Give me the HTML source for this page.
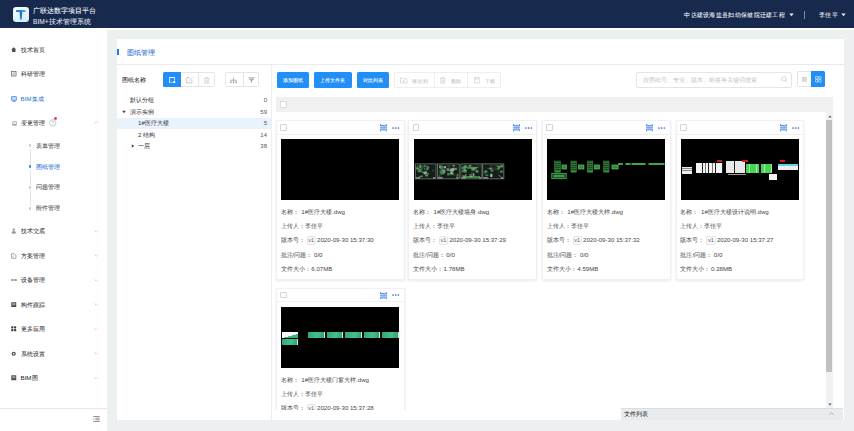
<!DOCTYPE html>
<html><head><meta charset="utf-8">
<style>
*{box-sizing:border-box;margin:0;padding:0}
html,body{width:854px;height:431px;overflow:hidden;background:#edf0f1;font-family:"Liberation Sans",sans-serif;color:#333}
.a{position:absolute;white-space:nowrap}
.t{position:absolute;white-space:nowrap;height:10px;line-height:10px;text-shadow:0 0 0.4px rgba(0,0,0,.3)}
#hdr .t{text-shadow:0 0 0.4px rgba(255,255,255,.5)}
#hdr{position:absolute;left:0;top:0;width:854px;height:28.4px;background:#172a4e}
#side{position:absolute;left:0;top:28px;width:107px;height:403px;background:#fff}
#panel{position:absolute;left:117px;top:38.5px;width:727px;height:381.5px;background:#fff}
.nav{font-size:6.2px;color:#444;left:20.5px}
.chev{position:absolute;left:94px;width:3.2px;height:3.2px;border-right:0.6px solid #b4b4b4;border-bottom:0.6px solid #b4b4b4;transform:rotate(45deg)}
.sub{font-size:6.2px;color:#555;left:35.5px}
.dot{position:absolute;left:28.6px;width:2.6px;height:2.6px;border-radius:50%;background:#ccc}
.btn{position:absolute;background:#228ff6;text-shadow:0 0 0.4px rgba(255,255,255,.6);border-radius:1.5px;color:#fff;font-size:5.3px;text-align:center;line-height:16px;height:16px;top:71.5px}
.card{position:absolute;width:128.5px;background:#fff;border:0.6px solid #eef0f2;box-shadow:0 1px 2.5px rgba(0,0,0,0.09);overflow:hidden}
.card .hd{position:absolute;left:0;top:0;right:0;height:13.5px;border-bottom:0.6px solid #eef0f2}
.card .cb{position:absolute;left:3.4px;top:3px;width:6.6px;height:6.6px;border:0.6px solid #d0d3d8;border-radius:1px;background:#fff}
.card .img{position:absolute;left:4.4px;top:18.3px;width:118px;height:61px;background:#000;overflow:hidden}
.card .ln{text-shadow:0 0 0.4px rgba(0,0,0,.2);position:absolute;left:3.6px;font-size:6.1px;color:#5a5a5a;height:10px;line-height:10px}
.card .ln.tag{border:0.6px solid #e6e6e6;border-radius:2px;padding:0 0.6px;height:8.6px;line-height:7.6px;font-size:5.6px;background:#f9f9f9;color:#666;text-shadow:none}
.ic{position:absolute}
</style></head><body>
<div id="hdr">
  <div class="a" style="left:13.2px;top:7px;width:15.4px;height:15px;border-radius:3.2px;background:linear-gradient(160deg,#f6fcff,#cfeafc)">
    <svg width="15" height="15" viewBox="0 0 15 15" style="position:absolute;left:0;top:0"><defs><linearGradient id="tg" x1="0" y1="0" x2="0" y2="1"><stop offset="0" stop-color="#1e6cc0"></stop><stop offset="1" stop-color="#2b8fd8"></stop></linearGradient><linearGradient id="tb" x1="0" y1="0" x2="1" y2="0"><stop offset="0" stop-color="#1b5fb2"></stop><stop offset="1" stop-color="#3aa2e4"></stop></linearGradient></defs><path d="M3 3.3Q7.5 2.6 12.6 3.2L12.4 5Q7.6 4.6 3.2 5z" fill="url(#tb)"></path><path d="M6.5 4.6h2.7v2.3L8.7 12.6H7z" fill="url(#tg)"></path></svg>
  </div>
  <div class="t" style="left: 33px; top: 6px; font-size: 7.1px; color: rgb(232, 237, 245); width: 63px; text-align: justify; text-align-last: justify;">广联达数字项目平台</div>
  <div class="t" style="left: 33px; top: 17px; font-size: 6.6px; color: rgb(201, 210, 224); width: 57.58px; text-align: justify; text-align-last: justify;">BIM+技术管理系统</div>
  <div class="t" style="left: 684.3px; top: 9.5px; font-size: 6.4px; letter-spacing: 0.3px; color: rgb(232, 237, 245); width: 100.51px; text-align: justify; text-align-last: justify;">中达建设海盐县妇幼保健院迁建工程</div>
  <svg class="ic" style="left:788.5px;top:13px" width="5" height="4" viewBox="0 0 5 4"><path d="M0.3 0.6h4.4L2.5 3.2z" fill="#e8edf5"></path></svg>
  <div class="a" style="left:803.5px;top:10.5px;width:1px;height:8px;background:#7d8aa2"></div>
  <div class="t" style="left: 818.8px; top: 9.5px; font-size: 6.4px; letter-spacing: 0.7px; color: rgb(232, 237, 245); width: 19.41px; text-align: justify; text-align-last: justify;">李佳平</div>
  <svg class="ic" style="left:841px;top:13px" width="5" height="4" viewBox="0 0 5 4"><path d="M0.3 0.6h4.4L2.5 3.2z" fill="#e8edf5"></path></svg>
</div>
<div id="side"></div>
<div class="a" style="left:107px;top:28.4px;width:747px;height:1.9px;background:#fff"></div>
<div class="t nav" style="top: 44.5px; color: rgb(68, 68, 68); width: 24px; text-align: justify; text-align-last: justify;">技术首页</div>
<svg class="ic" style="left:11.3px;top:46.7px" width="5.5" height="5.5" viewBox="0 0 6 6"><path d="M3 0.4L0.3 2.8h0.8v2.8h3.8V2.8h0.8z" fill="#505050"></path></svg>

<div class="t nav" style="top: 69px; color: rgb(68, 68, 68); width: 24px; text-align: justify; text-align-last: justify;">科研管理</div>
<svg class="ic" style="left:11.3px;top:71.2px" width="5.5" height="5.5" viewBox="0 0 6 6"><rect x="0.5" y="0.5" width="5" height="5" fill="none" stroke="#6a6a6a" stroke-width="0.8"></rect><path d="M1.5 2h3M1.5 3.2h3M1.5 4.4h3" stroke="#777" stroke-width="0.5"></path></svg>

<div class="t nav" style="top: 93.5px; color: rgb(75, 141, 240); width: 23.02px; text-align: justify; text-align-last: justify;">BIM集成</div>
<svg class="ic" style="left:11px;top:95.5px" width="6" height="6" viewBox="0 0 6 6"><rect x="0.5" y="0.5" width="5" height="4" rx="0.6" fill="#b9d3fa" stroke="#4b8df0" stroke-width="0.8"></rect><path d="M1.5 5.6h3" stroke="#4b8df0" stroke-width="0.8"></path></svg>

<div class="t nav" style="top: 118px; color: rgb(68, 68, 68); width: 24px; text-align: justify; text-align-last: justify;">变更管理</div>
<svg class="ic" style="left:11.5px;top:120.5px" width="5" height="5" viewBox="0 0 5 5"><rect x="0.3" y="0.3" width="4.4" height="4.4" fill="#a8a8a8"></rect><rect x="1" y="1" width="3" height="2" fill="#e6e6e6"></rect></svg>
<svg class="ic" style="left:11.5px;top:120.5px" width="0" height="0"></svg>
<svg class="ic" style="left:48.6px;top:119.2px" width="8" height="8" viewBox="0 0 8 8"><circle cx="3.8" cy="3.8" r="3.2" fill="none" stroke="#aaa" stroke-width="0.6"></circle><path d="M2.8 3c0-0.6 0.4-1 1-1s1 0.4 1 0.9c0 0.6-0.9 0.7-0.9 1.4" fill="none" stroke="#aaa" stroke-width="0.6"></path><circle cx="3.9" cy="5.6" r="0.35" fill="#aaa"></circle></svg>
<div class="a" style="left:54px;top:117px;width:2.8px;height:2.8px;border-radius:50%;background:#e24a68"></div>
<svg class="ic" style="left:93.8px;top:121.4px" width="4.6" height="2.8" viewBox="0 0 4.6 2.8"><path d="M0.3 2.5L2.3 0.5L4.3 2.5" fill="none" stroke="#b8b8b8" stroke-width="0.6"></path></svg>
<div class="t nav" style="top: 226px; color: rgb(68, 68, 68); width: 24px; text-align: justify; text-align-last: justify;">技术交底</div>
<svg class="ic" style="left:11.3px;top:228.0px" width="5.5" height="6" viewBox="0 0 6 6"><circle cx="3" cy="1.6" r="1.2" fill="#8c8c8c"></circle><path d="M0.6 5.8L1.5 3.2h3l0.9 2.6z" fill="#8c8c8c"></path></svg>
<svg class="ic" style="left:93.8px;top:229.6px" width="4.6" height="2.8" viewBox="0 0 4.6 2.8"><path d="M0.3 0.3L2.3 2.3L4.3 0.3" fill="none" stroke="#b8b8b8" stroke-width="0.6"></path></svg>
<div class="t nav" style="top: 250.5px; color: rgb(68, 68, 68); width: 24px; text-align: justify; text-align-last: justify;">方案管理</div>
<svg class="ic" style="left:11.3px;top:252.5px" width="5.5" height="6" viewBox="0 0 6 6"><path d="M0.6 0.5h3.2l1.6 1.6v3.4H0.6z" fill="none" stroke="#8c8c8c" stroke-width="0.8"></path><path d="M1.8 3.8l1.6-1.2" stroke="#8c8c8c" stroke-width="0.8"></path></svg>
<svg class="ic" style="left:93.8px;top:254.1px" width="4.6" height="2.8" viewBox="0 0 4.6 2.8"><path d="M0.3 0.3L2.3 2.3L4.3 0.3" fill="none" stroke="#b8b8b8" stroke-width="0.6"></path></svg>
<div class="t nav" style="top: 275px; color: rgb(68, 68, 68); width: 24px; text-align: justify; text-align-last: justify;">设备管理</div>
<svg class="ic" style="left:11px;top:278.0px" width="6" height="4" viewBox="0 0 6 4"><rect x="0.2" y="1" width="2.2" height="2" fill="#999"></rect><rect x="3.2" y="1" width="2.6" height="2" fill="#999"></rect></svg>
<svg class="ic" style="left:93.8px;top:278.6px" width="4.6" height="2.8" viewBox="0 0 4.6 2.8"><path d="M0.3 0.3L2.3 2.3L4.3 0.3" fill="none" stroke="#b8b8b8" stroke-width="0.6"></path></svg>
<div class="t nav" style="top: 299.5px; color: rgb(68, 68, 68); width: 24px; text-align: justify; text-align-last: justify;">构件跟踪</div>
<svg class="ic" style="left:11.3px;top:301.7px" width="5.5" height="5.5" viewBox="0 0 6 6"><rect x="0.3" y="0.3" width="5.4" height="5.4" fill="#4a4a4a"></rect><rect x="1.2" y="1.2" width="3.6" height="2.4" fill="#9a9a9a"></rect></svg>
<svg class="ic" style="left:93.8px;top:303.1px" width="4.6" height="2.8" viewBox="0 0 4.6 2.8"><path d="M0.3 0.3L2.3 2.3L4.3 0.3" fill="none" stroke="#b8b8b8" stroke-width="0.6"></path></svg>
<div class="t nav" style="top: 324px; color: rgb(68, 68, 68); width: 24px; text-align: justify; text-align-last: justify;">更多应用</div>
<svg class="ic" style="left:11.3px;top:326.2px" width="5.5" height="5.5" viewBox="0 0 6 6"><rect x="0.3" y="0.3" width="2.3" height="2.3" rx="0.6" fill="#3a3a3a"></rect><rect x="3.4" y="0.3" width="2.3" height="2.3" rx="0.6" fill="#3a3a3a"></rect><rect x="0.3" y="3.4" width="2.3" height="2.3" rx="0.6" fill="#3a3a3a"></rect><rect x="3.4" y="3.4" width="2.3" height="2.3" rx="0.6" fill="#3a3a3a"></rect></svg>
<svg class="ic" style="left:93.8px;top:327.6px" width="4.6" height="2.8" viewBox="0 0 4.6 2.8"><path d="M0.3 0.3L2.3 2.3L4.3 0.3" fill="none" stroke="#b8b8b8" stroke-width="0.6"></path></svg>
<div class="t nav" style="top: 348.5px; color: rgb(68, 68, 68); width: 24px; text-align: justify; text-align-last: justify;">系统设置</div>
<svg class="ic" style="left:11.3px;top:350.7px" width="5.5" height="5.5" viewBox="0 0 6 6"><circle cx="3" cy="3" r="2.3" fill="#555"></circle><circle cx="3" cy="3" r="0.9" fill="#fff"></circle></svg>
<svg class="ic" style="left:93.8px;top:352.1px" width="4.6" height="2.8" viewBox="0 0 4.6 2.8"><path d="M0.3 0.3L2.3 2.3L4.3 0.3" fill="none" stroke="#b8b8b8" stroke-width="0.6"></path></svg>
<div class="t nav" style="top: 373px; color: rgb(68, 68, 68); width: 17.02px; text-align: justify; text-align-last: justify;">BIM图</div>
<svg class="ic" style="left:11.3px;top:375.2px" width="5.5" height="5.5" viewBox="0 0 6 6"><rect x="0.3" y="0.3" width="5.4" height="5.4" fill="#4a4a4a"></rect><rect x="1.2" y="1.2" width="3.6" height="2.4" fill="#9a9a9a"></rect></svg>
<svg class="ic" style="left:93.8px;top:376.6px" width="4.6" height="2.8" viewBox="0 0 4.6 2.8"><path d="M0.3 0.3L2.3 2.3L4.3 0.3" fill="none" stroke="#b8b8b8" stroke-width="0.6"></path></svg>
<div class="a" style="left:29.6px;top:149px;width:0.7px;height:15.5px;background:#e4e4e4"></div><div class="a" style="left:29.6px;top:169.5px;width:0.7px;height:15.5px;background:#e4e4e4"></div><div class="a" style="left:29.6px;top:190px;width:0.7px;height:15.5px;background:#e4e4e4"></div>
<div class="dot" style="top:144.4px;background:#c9c9c9"></div>
<div class="t sub" style="top: 140.7px; color: rgb(85, 85, 85); width: 24px; text-align: justify; text-align-last: justify;">表单管理</div>
<div class="dot" style="top:165.4px;background:#2f7ff0"></div>
<div class="t sub" style="top: 161.7px; color: rgb(47, 127, 240); width: 24px; text-align: justify; text-align-last: justify;">图纸管理</div>
<div class="dot" style="top:186.1px;background:#c9c9c9"></div>
<div class="t sub" style="top: 182.4px; color: rgb(85, 85, 85); width: 24px; text-align: justify; text-align-last: justify;">问题管理</div>
<div class="dot" style="top:207.0px;background:#c9c9c9"></div>
<div class="t sub" style="top: 203.3px; color: rgb(85, 85, 85); width: 24px; text-align: justify; text-align-last: justify;">附件管理</div>
<div class="a" style="left:0;top:408px;width:107px;height:0.7px;background:#e8e8e8"></div>
<svg class="ic" style="left:92.5px;top:416px" width="7" height="6" viewBox="0 0 7 6"><path d="M0.3 0.5h6.4M2.3 2.2h4.4M2.3 3.8h4.4M0.3 5.5h6.4" stroke="#666" stroke-width="0.7"></path><path d="M0.3 2.2v1.6l1.2-0.8z" fill="#666"></path></svg>
<div id="panel"></div>
<div class="a" style="left:117px;top:49px;width:2px;height:6.2px;background:#1f7fe8"></div>
<div class="t" style="left: 126.5px; top: 47.6px; font-size: 7.1px; color: rgb(58, 130, 234); width: 28px; text-align: justify; text-align-last: justify;">图纸管理</div>
<div class="a" style="left:117px;top:64px;width:727px;height:0.7px;background:#e8eaee"></div>
<div class="t" style="left: 122px; top: 74.5px; font-size: 6.2px; color: rgb(51, 51, 51); width: 24px; text-align: justify; text-align-last: justify;">图纸名称</div>
<div class="a" style="left:163.4px;top:71.7px;width:51.7px;height:15.7px;border:0.6px solid #e3e5e8;border-radius:1.5px;background:#fff"></div>
<div class="a" style="left:163.4px;top:71.7px;width:17.3px;height:15.7px;border-radius:1.5px 0 0 1.5px;background:#228ff6"></div>
<div class="a" style="left:197.5px;top:71.7px;width:0.6px;height:15.7px;background:#e3e5e8"></div>
<svg class="ic" style="left:169px;top:76.8px" width="7" height="6.5" viewBox="0 0 7 6.5"><path d="M4.5 0.5H0.6v5.4h3.6" fill="none" stroke="#fff" stroke-width="0.8"></path><path d="M0.6 0.5h5v2.8" fill="none" stroke="#fff" stroke-width="0.8"></path><circle cx="5.2" cy="5" r="1.2" fill="#fff"></circle></svg>
<svg class="ic" style="left:185.8px;top:77px" width="7.5" height="6.5" viewBox="0 0 7.5 6.5"><path d="M3.5 0.6H0.6v5.3h5.3V3.2" fill="none" stroke="#aaa" stroke-width="0.6"></path><path d="M2.8 3.8L6.6 0.4" stroke="#aaa" stroke-width="0.6"></path></svg>
<svg class="ic" style="left:204px;top:77px" width="5.5" height="6.5" viewBox="0 0 5.5 6.5"><path d="M0.2 1.3h5.1M1.8 1.2V0.4h1.9v0.8M0.8 1.4v4.8h3.9V1.4M2 2.5v2.8M3.5 2.5v2.8" fill="none" stroke="#c4c4c4" stroke-width="0.6"></path></svg>
<div class="a" style="left:224.9px;top:71.7px;width:34.4px;height:15.7px;border:0.6px solid #e3e5e8;border-radius:1.5px;background:#fff"></div>
<div class="a" style="left:242.6px;top:71.7px;width:0.6px;height:15.7px;background:#e3e5e8"></div>
<svg class="ic" style="left:230px;top:76.5px" width="7" height="6.5" viewBox="0 0 7 6.5"><path d="M3.5 0.4v2.4M0.8 3.2h5.4M0.8 3.2v1.5M3.5 3.2v1.5M6.2 3.2v1.5" stroke="#888" stroke-width="0.6" fill="none"></path><rect x="0.2" y="4.6" width="1.3" height="1.3" fill="#888"></rect><rect x="2.85" y="4.6" width="1.3" height="1.3" fill="#888"></rect><rect x="5.5" y="4.6" width="1.3" height="1.3" fill="#888"></rect></svg>
<svg class="ic" style="left:247.5px;top:76.5px" width="7" height="6.5" viewBox="0 0 7 6.5"><path d="M0.5 0.9h6M1.2 2.3h4.6" stroke="#8c8c8c" stroke-width="0.8"></path><path d="M2.3 3.1h2.4L3.5 4.6z" fill="#8c8c8c"></path><path d="M3.5 4.2v1.6" stroke="#8c8c8c" stroke-width="0.6"></path></svg>
<div class="a" style="left:117px;top:117.6px;width:153.5px;height:11.3px;background:#e8f3fe"></div>
<div class="t" style="left: 130px; top: 94.8px; font-size: 6.2px; color: rgb(85, 85, 85); width: 24px; text-align: justify; text-align-last: justify;">默认分组</div>
<div class="t" style="left:230px;width:37px;text-align:right;top:94.80px;font-size:6px;color:#777">0</div>
<div class="t" style="left: 130px; top: 106.75px; font-size: 6.2px; color: rgb(85, 85, 85); width: 24px; text-align: justify; text-align-last: justify;">演示实例</div>
<div class="t" style="left:230px;width:37px;text-align:right;top:106.75px;font-size:6px;color:#777">59</div>
<svg class="ic" style="left:121.5px;top:109.75px" width="4" height="4" viewBox="0 0 4 4"><path d="M0.2 0.8h3.6L2 3.2z" fill="#444"></path></svg>
<div class="t" style="left: 138px; top: 118.3px; font-size: 6.2px; color: rgb(85, 85, 85); width: 30.89px; text-align: justify; text-align-last: justify;">1#医疗大楼</div>
<div class="t" style="left:230px;width:37px;text-align:right;top:118.30px;font-size:6px;color:#777">5</div>
<div class="t" style="left: 138px; top: 129.9px; font-size: 6.2px; color: rgb(85, 85, 85); width: 17.17px; text-align: justify; text-align-last: justify;">2 结构</div>
<div class="t" style="left:230px;width:37px;text-align:right;top:129.90px;font-size:6px;color:#777">14</div>
<div class="t" style="left: 138px; top: 141.4px; font-size: 6.2px; color: rgb(85, 85, 85); width: 12px; text-align: justify; text-align-last: justify;">一层</div>
<div class="t" style="left:230px;width:37px;text-align:right;top:141.40px;font-size:6px;color:#777">38</div>
<svg class="ic" style="left:130.5px;top:144.40px" width="4" height="4" viewBox="0 0 4 4"><path d="M0.8 0.2v3.6L3.2 2z" fill="#444"></path></svg>
<div class="a" style="left:270.7px;top:64.5px;width:0.7px;height:355.5px;background:#eceef1"></div>
<div class="btn" style="left:276.5px;width:32.0px"><span style="display:inline-block;width:20.00px;text-align:justify;text-align-last:justify;white-space:nowrap">添加图纸</span></div>
<div class="btn" style="left:314.2px;width:37.4px"><span style="display:inline-block;width:25.00px;text-align:justify;text-align-last:justify;white-space:nowrap">上传文件夹</span></div>
<div class="btn" style="left:356.6px;width:32.2px"><span style="display:inline-block;width:20.00px;text-align:justify;text-align-last:justify;white-space:nowrap">对比列表</span></div>
<div class="a" style="left:394px;top:72px;width:107px;height:16.3px;border:0.6px solid #eceef0;border-radius:1.5px;background:#fff"></div>
<div class="a" style="left:433.8px;top:72px;width:0.6px;height:16.3px;background:#eceef0"></div>
<div class="a" style="left:466.6px;top:72px;width:0.6px;height:16.3px;background:#eceef0"></div>
<svg class="ic" style="left:400px;top:77px" width="7.5" height="6.5" viewBox="0 0 7.5 6.5"><path d="M0.5 1v5h6.5V1.8H3.6L3 1z" fill="none" stroke="#c8c8c8" stroke-width="0.6"></path><path d="M3.7 2.6v2.4M2.6 3.9l1.1 1.1 1.1-1.1" fill="none" stroke="#c8c8c8" stroke-width="0.6"></path></svg>
<div class="t" style="left: 412px; top: 75.5px; font-size: 5.4px; letter-spacing: 0.3px; color: rgb(184, 184, 184); text-shadow: none; width: 15.61px; text-align: justify; text-align-last: justify;">移动到</div>
<svg class="ic" style="left:440px;top:77px" width="5.5" height="6.5" viewBox="0 0 5.5 6.5"><path d="M0.2 1.3h5.1M1.8 1.2V0.4h1.9v0.8M0.8 1.4v4.8h3.9V1.4M2 2.5v2.8M3.5 2.5v2.8" fill="none" stroke="#c8c8c8" stroke-width="0.6"></path></svg>
<div class="t" style="left: 451px; top: 75.5px; font-size: 5.4px; letter-spacing: 0.3px; color: rgb(184, 184, 184); text-shadow: none; width: 10.31px; text-align: justify; text-align-last: justify;">删除</div>
<svg class="ic" style="left:473.5px;top:77px" width="6.5" height="6.5" viewBox="0 0 6.5 6.5"><path d="M0.5 0.5h4.3l1.2 1.2v4.3H0.5z M1.6 0.6v1.6h3V0.6" fill="none" stroke="#c8c8c8" stroke-width="0.6"></path></svg>
<div class="t" style="left: 484.5px; top: 75.5px; font-size: 5.4px; letter-spacing: 0.3px; color: rgb(184, 184, 184); text-shadow: none; width: 10.31px; text-align: justify; text-align-last: justify;">下载</div>
<div class="a" style="left:636.4px;top:71.5px;width:155.6px;height:16px;border:0.6px solid #e3e5e8;border-radius:2px;background:#fff"></div>
<div class="t" style="left: 643px; top: 74.5px; font-size: 5.85px; color: rgb(196, 196, 196); text-shadow: none; width: 114px; text-align: justify; text-align-last: justify;">按图纸号、专业、版本、标签等关键词搜索</div>
<svg class="ic" style="left:781px;top:76px" width="7" height="6.5" viewBox="0 0 7 6.5"><circle cx="3" cy="2.9" r="2.2" fill="none" stroke="#c4c4c4" stroke-width="0.7"></circle><path d="M4.6 4.5l1.6 1.5" stroke="#c4c4c4" stroke-width="0.7"></path></svg>
<div class="a" style="left:797.3px;top:71.3px;width:27.7px;height:16.1px;border:0.6px solid #e3e5e8;border-radius:1.5px;background:#fff"></div>
<div class="a" style="left:811.2px;top:71.3px;width:13.8px;height:16.1px;border-radius:0 1.5px 1.5px 0;background:#228ff6"></div>
<svg class="ic" style="left:802px;top:77.2px" width="5" height="4.8" viewBox="0 0 5 4.8"><rect x="0" y="0" width="5" height="4.8" fill="#d4d4d4"></rect><path d="M0 1.6h5M0 3.2h5" stroke="#eee" stroke-width="0.4"></path></svg>
<svg class="ic" style="left:815px;top:76.2px" width="6.5" height="6.5" viewBox="0 0 6.5 6.5"><rect x="0.4" y="0.4" width="2.5" height="2.5" rx="0.5" fill="none" stroke="#fff" stroke-width="0.6"></rect><rect x="3.6" y="0.4" width="2.5" height="2.5" rx="0.5" fill="none" stroke="#fff" stroke-width="0.6"></rect><rect x="0.4" y="3.6" width="2.5" height="2.5" rx="0.5" fill="none" stroke="#fff" stroke-width="0.6"></rect><rect x="3.6" y="3.6" width="2.5" height="2.5" rx="0.5" fill="none" stroke="#fff" stroke-width="0.6"></rect></svg>
<div class="a" style="left:275.6px;top:96.5px;width:557px;height:15.5px;background:#f0f0f0"></div>
<div class="a" style="left:279.5px;top:101.3px;width:7px;height:7px;border:0.6px solid #dadada;border-radius:1px;background:#fff"></div>
<div class="a" style="left:275px;top:112px;width:551px;height:298.3px;overflow:hidden">
<div class="card" style="left:1.0px;top:8.0px;height:160px">
<div class="hd"></div><div class="cb"></div><svg class="ic" style="left:103.3px;top:3.3px" width="7.2" height="7.4" viewBox="0 0 7.2 7.4"><rect x="0.5" y="1.3" width="6.2" height="4.8" fill="#a9cbf8"></rect><path d="M0.5 0v2M6.7 0v2M0.5 5.4v2M6.7 5.4v2" stroke="#3d7fe0" stroke-width="0.8"></path><path d="M0.5 1.4h6.2M0.5 6h6.2" stroke="#3d7fe0" stroke-width="0.7"></path><path d="M0 3.7h7.2" stroke="#4f8fe8" stroke-width="0.7"></path></svg><svg class="ic" style="left:115.3px;top:5.6px" width="7.4" height="2" viewBox="0 0 7.4 2"><circle cx="1" cy="1" r="0.85" fill="#2f6fd8"></circle><circle cx="3.7" cy="1" r="0.85" fill="#2f6fd8"></circle><circle cx="6.4" cy="1" r="0.85" fill="#2f6fd8"></circle></svg>
<div class="img"></div>
<div class="ln" style="top: 86px; width: 18px; text-align: justify; text-align-last: justify;">名称：</div><div class="ln" style="top: 86px; left: 24.3px; width: 43.66px; text-align: justify; text-align-last: justify;">1#医疗大楼.dwg</div>
<div class="ln" style="top: 100.4px; width: 42px; text-align: justify; text-align-last: justify;">上传人：李佳平</div>
<div class="ln" style="top: 114.2px; width: 24px; text-align: justify; text-align-last: justify;">版本号：</div><div class="ln tag" style="top:115.2px;left:29.6px">v1</div><div class="ln" style="top:114.2px;left:40.1px">2020-09-30 15:37:30</div>
<div class="ln" style="top: 128.7px; width: 31.7px; text-align: justify; text-align-last: justify;">批注/问题：</div><div class="ln" style="top:128.7px;left:37px">0/0</div>
<div class="ln" style="top: 143px; width: 30px; text-align: justify; text-align-last: justify;">文件大小：</div><div class="ln" style="top:143px;left:34.3px">6.07MB</div>
</div>
<div class="card" style="left:133.3px;top:8.0px;height:160px">
<div class="hd"></div><div class="cb"></div><svg class="ic" style="left:103.3px;top:3.3px" width="7.2" height="7.4" viewBox="0 0 7.2 7.4"><rect x="0.5" y="1.3" width="6.2" height="4.8" fill="#a9cbf8"></rect><path d="M0.5 0v2M6.7 0v2M0.5 5.4v2M6.7 5.4v2" stroke="#3d7fe0" stroke-width="0.8"></path><path d="M0.5 1.4h6.2M0.5 6h6.2" stroke="#3d7fe0" stroke-width="0.7"></path><path d="M0 3.7h7.2" stroke="#4f8fe8" stroke-width="0.7"></path></svg><svg class="ic" style="left:115.3px;top:5.6px" width="7.4" height="2" viewBox="0 0 7.4 2"><circle cx="1" cy="1" r="0.85" fill="#2f6fd8"></circle><circle cx="3.7" cy="1" r="0.85" fill="#2f6fd8"></circle><circle cx="6.4" cy="1" r="0.85" fill="#2f6fd8"></circle></svg>
<div class="img"><svg width="118" height="61" viewBox="0 0 118 61" style="position:absolute;left:0;top:0"><rect x="1.2" y="24.9" width="20.8" height="15.0" fill="#141c16"></rect><rect x="17.8" y="30.5" width="2.4" height="2.1" fill="#2a4a30" opacity="0.8"></rect><rect x="13.2" y="33.9" width="1.6" height="2.0" fill="#5aa866" opacity="0.8"></rect><rect x="11.1" y="35.7" width="2.3" height="1.1" fill="#3b8a48" opacity="0.8"></rect><rect x="9.4" y="33.6" width="2.8" height="1.8" fill="#7fae88" opacity="0.8"></rect><rect x="2.8" y="26.0" width="2.9" height="2.8" fill="#2a4a30" opacity="0.8"></rect><rect x="7.2" y="31.5" width="2.8" height="2.7" fill="#2a4a30" opacity="0.8"></rect><rect x="10.3" y="32.4" width="2.6" height="2.3" fill="#c8d0c8" opacity="0.8"></rect><rect x="11.0" y="35.6" width="3.0" height="1.8" fill="#5aa866" opacity="0.8"></rect><rect x="5.5" y="28.8" width="3.1" height="1.6" fill="#5aa866" opacity="0.8"></rect><rect x="3.5" y="29.0" width="2.7" height="1.1" fill="#5aa866" opacity="0.8"></rect><rect x="1.7" y="27.7" width="3.9" height="2.8" fill="#3b8a48" opacity="0.8"></rect><rect x="8.6" y="26.4" width="2.4" height="3.2" fill="#2a4a30" opacity="0.8"></rect><rect x="3.1" y="29.3" width="3.3" height="1.4" fill="#1c2c1f" opacity="0.8"></rect><rect x="5.8" y="26.8" width="3.3" height="1.1" fill="#3b8a48" opacity="0.8"></rect><rect x="13.6" y="27.7" width="2.4" height="2.0" fill="#2a4a30" opacity="0.8"></rect><rect x="8.3" y="29.4" width="4.0" height="2.6" fill="#1c2c1f" opacity="0.8"></rect><rect x="6.4" y="36.5" width="2.3" height="1.3" fill="#8f9a90" opacity="0.8"></rect><rect x="4.7" y="37.2" width="4.0" height="0.8" fill="#5aa866" opacity="0.8"></rect><rect x="9.9" y="25.8" width="1.1" height="1.2" fill="#4f9f5c" opacity="0.8"></rect><rect x="2.9" y="27.9" width="3.5" height="1.7" fill="#2a4a30" opacity="0.8"></rect><rect x="13.4" y="27.1" width="1.0" height="1.7" fill="#c8d0c8" opacity="0.8"></rect><rect x="8.0" y="32.8" width="3.5" height="1.1" fill="#8f9a90" opacity="0.8"></rect><rect x="5.7" y="27.5" width="3.7" height="2.8" fill="#2a4a30" opacity="0.8"></rect><rect x="9.8" y="26.5" width="3.1" height="1.7" fill="#3b8a48" opacity="0.8"></rect><rect x="19.5" y="28.4" width="1.3" height="0.9" fill="#1c2c1f" opacity="0.8"></rect><rect x="12.5" y="28.5" width="1.8" height="2.8" fill="#7fae88" opacity="0.8"></rect><rect x="3.7" y="30.1" width="3.8" height="3.1" fill="#5aa866" opacity="0.8"></rect><rect x="5.4" y="25.9" width="1.8" height="3.0" fill="#8f9a90" opacity="0.8"></rect><rect x="2.5" y="28.8" width="2.2" height="1.4" fill="#7fae88" opacity="0.8"></rect><rect x="10.0" y="29.4" width="1.3" height="1.1" fill="#7fae88" opacity="0.8"></rect><rect x="1.8" y="38.4" width="4.5" height="1" fill="#e0c4c8"></rect><rect x="19.0" y="38.4" width="2.2" height="1" fill="#c8c8c8"></rect><rect x="1.2" y="24.9" width="20.8" height="15.0" fill="none" stroke="#9aa39c" stroke-width="0.6"></rect><rect x="23.6" y="24.9" width="21.6" height="15.0" fill="#141c16"></rect><rect x="32.6" y="29.1" width="2.8" height="3.0" fill="#8f9a90" opacity="0.8"></rect><rect x="34.7" y="31.3" width="3.9" height="0.9" fill="#8f9a90" opacity="0.8"></rect><rect x="25.5" y="30.7" width="2.0" height="3.2" fill="#3b8a48" opacity="0.8"></rect><rect x="36.0" y="33.5" width="3.7" height="2.6" fill="#4f9f5c" opacity="0.8"></rect><rect x="40.8" y="34.4" width="2.1" height="2.4" fill="#1c2c1f" opacity="0.8"></rect><rect x="32.5" y="25.9" width="3.8" height="0.9" fill="#1c2c1f" opacity="0.8"></rect><rect x="25.4" y="26.7" width="2.1" height="0.8" fill="#5aa866" opacity="0.8"></rect><rect x="36.2" y="29.4" width="4.0" height="2.9" fill="#c8d0c8" opacity="0.8"></rect><rect x="25.6" y="32.9" width="2.3" height="2.8" fill="#3b8a48" opacity="0.8"></rect><rect x="24.5" y="36.6" width="1.9" height="1.0" fill="#5aa866" opacity="0.8"></rect><rect x="40.8" y="28.3" width="2.5" height="2.3" fill="#3b8a48" opacity="0.8"></rect><rect x="35.4" y="31.5" width="2.1" height="1.1" fill="#4f9f5c" opacity="0.8"></rect><rect x="39.8" y="29.1" width="3.0" height="1.9" fill="#8f9a90" opacity="0.8"></rect><rect x="39.4" y="35.4" width="1.6" height="1.8" fill="#2a4a30" opacity="0.8"></rect><rect x="29.9" y="27.1" width="2.2" height="2.2" fill="#c8d0c8" opacity="0.8"></rect><rect x="24.9" y="26.3" width="2.1" height="2.9" fill="#8f9a90" opacity="0.8"></rect><rect x="32.2" y="36.2" width="3.5" height="1.1" fill="#1c2c1f" opacity="0.8"></rect><rect x="36.5" y="33.1" width="2.1" height="2.0" fill="#c8d0c8" opacity="0.8"></rect><rect x="29.3" y="31.5" width="2.0" height="2.8" fill="#8f9a90" opacity="0.8"></rect><rect x="38.3" y="25.9" width="2.7" height="1.5" fill="#7fae88" opacity="0.8"></rect><rect x="38.2" y="28.7" width="2.2" height="1.3" fill="#7fae88" opacity="0.8"></rect><rect x="26.1" y="26.7" width="3.4" height="3.2" fill="#4f9f5c" opacity="0.8"></rect><rect x="27.4" y="30.4" width="3.9" height="2.4" fill="#7fae88" opacity="0.8"></rect><rect x="33.4" y="26.1" width="3.1" height="2.6" fill="#2a4a30" opacity="0.8"></rect><rect x="37.2" y="31.3" width="1.8" height="1.6" fill="#7fae88" opacity="0.8"></rect><rect x="40.8" y="26.5" width="2.2" height="2.7" fill="#1c2c1f" opacity="0.8"></rect><rect x="36.1" y="35.3" width="1.4" height="1.9" fill="#1c2c1f" opacity="0.8"></rect><rect x="33.1" y="33.9" width="2.7" height="2.4" fill="#4f9f5c" opacity="0.8"></rect><rect x="27.8" y="32.9" width="2.4" height="2.4" fill="#5aa866" opacity="0.8"></rect><rect x="42.7" y="34.9" width="1.6" height="3.0" fill="#4f9f5c" opacity="0.8"></rect><rect x="24.2" y="38.4" width="4.5" height="1" fill="#e0c4c8"></rect><rect x="42.2" y="38.4" width="2.2" height="1" fill="#c8c8c8"></rect><rect x="23.6" y="24.9" width="21.6" height="15.0" fill="none" stroke="#9aa39c" stroke-width="0.6"></rect><rect x="46.9" y="24.9" width="21.1" height="15.0" fill="#141c16"></rect><rect x="47.7" y="30.7" width="1.8" height="2.5" fill="#3b8a48" opacity="0.8"></rect><rect x="61.1" y="30.7" width="2.3" height="2.1" fill="#3b8a48" opacity="0.8"></rect><rect x="55.3" y="26.0" width="1.7" height="2.9" fill="#4f9f5c" opacity="0.8"></rect><rect x="55.4" y="35.1" width="3.1" height="3.0" fill="#c8d0c8" opacity="0.8"></rect><rect x="62.8" y="26.6" width="3.8" height="2.0" fill="#2a4a30" opacity="0.8"></rect><rect x="62.2" y="31.5" width="2.3" height="2.1" fill="#7fae88" opacity="0.8"></rect><rect x="57.2" y="28.7" width="2.6" height="2.8" fill="#1c2c1f" opacity="0.8"></rect><rect x="57.3" y="28.6" width="3.9" height="2.9" fill="#7fae88" opacity="0.8"></rect><rect x="56.7" y="27.8" width="3.9" height="2.1" fill="#5aa866" opacity="0.8"></rect><rect x="47.9" y="35.5" width="2.5" height="2.3" fill="#1c2c1f" opacity="0.8"></rect><rect x="49.5" y="26.6" width="2.6" height="3.2" fill="#7fae88" opacity="0.8"></rect><rect x="55.2" y="35.6" width="1.2" height="2.1" fill="#1c2c1f" opacity="0.8"></rect><rect x="49.7" y="30.2" width="1.8" height="1.9" fill="#c8d0c8" opacity="0.8"></rect><rect x="54.8" y="26.0" width="2.6" height="1.1" fill="#8f9a90" opacity="0.8"></rect><rect x="47.8" y="27.6" width="1.4" height="2.7" fill="#2a4a30" opacity="0.8"></rect><rect x="61.2" y="28.4" width="1.0" height="1.5" fill="#c8d0c8" opacity="0.8"></rect><rect x="49.7" y="30.7" width="1.3" height="2.6" fill="#8f9a90" opacity="0.8"></rect><rect x="62.3" y="25.9" width="3.2" height="2.5" fill="#1c2c1f" opacity="0.8"></rect><rect x="56.3" y="34.4" width="3.5" height="2.3" fill="#2a4a30" opacity="0.8"></rect><rect x="58.1" y="33.9" width="2.6" height="2.8" fill="#2a4a30" opacity="0.8"></rect><rect x="53.1" y="27.5" width="3.7" height="2.3" fill="#4f9f5c" opacity="0.8"></rect><rect x="60.2" y="27.9" width="3.7" height="1.3" fill="#5aa866" opacity="0.8"></rect><rect x="61.0" y="28.6" width="1.4" height="1.4" fill="#5aa866" opacity="0.8"></rect><rect x="57.1" y="32.3" width="2.3" height="3.1" fill="#2a4a30" opacity="0.8"></rect><rect x="47.7" y="27.7" width="2.2" height="2.4" fill="#4f9f5c" opacity="0.8"></rect><rect x="49.3" y="30.4" width="3.7" height="3.1" fill="#4f9f5c" opacity="0.8"></rect><rect x="50.7" y="26.4" width="2.5" height="2.4" fill="#5aa866" opacity="0.8"></rect><rect x="59.1" y="34.5" width="1.1" height="2.6" fill="#c8d0c8" opacity="0.8"></rect><rect x="51.2" y="35.1" width="1.4" height="1.2" fill="#8f9a90" opacity="0.8"></rect><rect x="48.4" y="36.5" width="3.8" height="1.0" fill="#c8d0c8" opacity="0.8"></rect><rect x="47.5" y="38.4" width="4.5" height="1" fill="#e0c4c8"></rect><rect x="65.0" y="38.4" width="2.2" height="1" fill="#c8c8c8"></rect><rect x="46.9" y="24.9" width="21.1" height="15.0" fill="none" stroke="#9aa39c" stroke-width="0.6"></rect><rect x="68.8" y="24.9" width="21.1" height="15.0" fill="#141c16"></rect><rect x="76.7" y="30.5" width="1.2" height="1.0" fill="#4f9f5c" opacity="0.8"></rect><rect x="69.5" y="32.8" width="2.3" height="2.2" fill="#2a4a30" opacity="0.8"></rect><rect x="83.0" y="30.0" width="1.5" height="1.9" fill="#2a4a30" opacity="0.8"></rect><rect x="83.0" y="29.4" width="2.8" height="1.0" fill="#5aa866" opacity="0.8"></rect><rect x="83.7" y="31.9" width="3.4" height="2.5" fill="#1c2c1f" opacity="0.8"></rect><rect x="79.5" y="29.5" width="2.7" height="1.3" fill="#8f9a90" opacity="0.8"></rect><rect x="82.9" y="27.5" width="1.8" height="1.1" fill="#1c2c1f" opacity="0.8"></rect><rect x="79.4" y="29.7" width="1.4" height="1.6" fill="#1c2c1f" opacity="0.8"></rect><rect x="81.4" y="26.4" width="3.3" height="1.8" fill="#4f9f5c" opacity="0.8"></rect><rect x="85.5" y="37.0" width="1.9" height="1.0" fill="#3b8a48" opacity="0.8"></rect><rect x="81.6" y="28.9" width="1.7" height="3.1" fill="#1c2c1f" opacity="0.8"></rect><rect x="76.1" y="36.0" width="2.7" height="2.1" fill="#2a4a30" opacity="0.8"></rect><rect x="86.0" y="25.9" width="3.1" height="2.6" fill="#5aa866" opacity="0.8"></rect><rect x="76.1" y="26.3" width="3.2" height="1.4" fill="#2a4a30" opacity="0.8"></rect><rect x="73.7" y="28.9" width="2.9" height="0.8" fill="#4f9f5c" opacity="0.8"></rect><rect x="86.2" y="31.6" width="2.7" height="2.0" fill="#5aa866" opacity="0.8"></rect><rect x="70.6" y="31.5" width="2.9" height="2.7" fill="#3b8a48" opacity="0.8"></rect><rect x="76.2" y="34.8" width="2.2" height="3.1" fill="#c8d0c8" opacity="0.8"></rect><rect x="76.8" y="30.7" width="2.6" height="2.2" fill="#8f9a90" opacity="0.8"></rect><rect x="75.7" y="28.6" width="2.6" height="2.2" fill="#8f9a90" opacity="0.8"></rect><rect x="81.8" y="28.9" width="2.7" height="1.5" fill="#3b8a48" opacity="0.8"></rect><rect x="79.9" y="29.9" width="3.3" height="2.2" fill="#1c2c1f" opacity="0.8"></rect><rect x="76.8" y="32.0" width="1.2" height="1.6" fill="#4f9f5c" opacity="0.8"></rect><rect x="77.4" y="30.2" width="1.2" height="3.0" fill="#2a4a30" opacity="0.8"></rect><rect x="84.7" y="36.0" width="1.1" height="1.0" fill="#7fae88" opacity="0.8"></rect><rect x="79.1" y="26.8" width="3.9" height="2.8" fill="#1c2c1f" opacity="0.8"></rect><rect x="70.2" y="31.6" width="2.4" height="1.3" fill="#5aa866" opacity="0.8"></rect><rect x="76.8" y="32.5" width="2.1" height="1.1" fill="#1c2c1f" opacity="0.8"></rect><rect x="84.0" y="27.0" width="2.1" height="2.6" fill="#8f9a90" opacity="0.8"></rect><rect x="71.2" y="35.5" width="3.2" height="1.4" fill="#4f9f5c" opacity="0.8"></rect><rect x="69.4" y="38.4" width="4.5" height="1" fill="#e0c4c8"></rect><rect x="86.9" y="38.4" width="2.2" height="1" fill="#c8c8c8"></rect><rect x="68.8" y="24.9" width="21.1" height="15.0" fill="none" stroke="#9aa39c" stroke-width="0.6"></rect><rect x="49" y="37.4" width="17" height="1.2" fill="#5cc86a"></rect></svg></div>
<div class="ln" style="top: 86px; width: 18px; text-align: justify; text-align-last: justify;">名称：</div><div class="ln" style="top: 86px; left: 24.3px; width: 55.66px; text-align: justify; text-align-last: justify;">1#医疗大楼墙身.dwg</div>
<div class="ln" style="top: 100.4px; width: 42px; text-align: justify; text-align-last: justify;">上传人：李佳平</div>
<div class="ln" style="top: 114.2px; width: 24px; text-align: justify; text-align-last: justify;">版本号：</div><div class="ln tag" style="top:115.2px;left:29.6px">v1</div><div class="ln" style="top:114.2px;left:40.1px">2020-09-30 15:37:29</div>
<div class="ln" style="top: 128.7px; width: 31.7px; text-align: justify; text-align-last: justify;">批注/问题：</div><div class="ln" style="top:128.7px;left:37px">0/0</div>
<div class="ln" style="top: 143px; width: 30px; text-align: justify; text-align-last: justify;">文件大小：</div><div class="ln" style="top:143px;left:34.3px">1.78MB</div>
</div>
<div class="card" style="left:267.0px;top:8.0px;height:160px">
<div class="hd"></div><div class="cb"></div><svg class="ic" style="left:103.3px;top:3.3px" width="7.2" height="7.4" viewBox="0 0 7.2 7.4"><rect x="0.5" y="1.3" width="6.2" height="4.8" fill="#a9cbf8"></rect><path d="M0.5 0v2M6.7 0v2M0.5 5.4v2M6.7 5.4v2" stroke="#3d7fe0" stroke-width="0.8"></path><path d="M0.5 1.4h6.2M0.5 6h6.2" stroke="#3d7fe0" stroke-width="0.7"></path><path d="M0 3.7h7.2" stroke="#4f8fe8" stroke-width="0.7"></path></svg><svg class="ic" style="left:115.3px;top:5.6px" width="7.4" height="2" viewBox="0 0 7.4 2"><circle cx="1" cy="1" r="0.85" fill="#2f6fd8"></circle><circle cx="3.7" cy="1" r="0.85" fill="#2f6fd8"></circle><circle cx="6.4" cy="1" r="0.85" fill="#2f6fd8"></circle></svg>
<div class="img"><svg width="118" height="61" viewBox="0 0 118 61" style="position:absolute;left:0;top:0"><rect x="7.5" y="22.6" width="6.0" height="1" fill="#55cc62" opacity="0.9"></rect><rect x="7.5" y="24.6" width="6.0" height="1" fill="#55cc62" opacity="0.9"></rect><rect x="7.5" y="26.6" width="6.0" height="1" fill="#55cc62" opacity="0.9"></rect><rect x="7.5" y="28.6" width="6.0" height="1" fill="#55cc62" opacity="0.9"></rect><rect x="7.5" y="30.6" width="6.0" height="1" fill="#55cc62" opacity="0.9"></rect><rect x="7.5" y="32.4" width="6.0" height="1" fill="#55cc62" opacity="0.9"></rect><rect x="7.5" y="22" width="6.0" height="10.6" fill="none" stroke="#55cc62" stroke-width="0.5" opacity="0.6"></rect><rect x="23.9" y="22.6" width="5.6" height="1" fill="#55cc62" opacity="0.9"></rect><rect x="23.9" y="24.6" width="5.6" height="1" fill="#55cc62" opacity="0.9"></rect><rect x="23.9" y="26.6" width="5.6" height="1" fill="#55cc62" opacity="0.9"></rect><rect x="23.9" y="28.6" width="5.6" height="1" fill="#55cc62" opacity="0.9"></rect><rect x="23.9" y="30.6" width="5.6" height="1" fill="#55cc62" opacity="0.9"></rect><rect x="23.9" y="32.4" width="5.6" height="1" fill="#55cc62" opacity="0.9"></rect><rect x="23.9" y="22" width="5.6" height="10.6" fill="none" stroke="#55cc62" stroke-width="0.5" opacity="0.6"></rect><rect x="40.2" y="22.6" width="5.7" height="1" fill="#55cc62" opacity="0.9"></rect><rect x="40.2" y="24.6" width="5.7" height="1" fill="#55cc62" opacity="0.9"></rect><rect x="40.2" y="26.6" width="5.7" height="1" fill="#55cc62" opacity="0.9"></rect><rect x="40.2" y="28.6" width="5.7" height="1" fill="#55cc62" opacity="0.9"></rect><rect x="40.2" y="30.6" width="5.7" height="1" fill="#55cc62" opacity="0.9"></rect><rect x="40.2" y="32.4" width="5.7" height="1" fill="#55cc62" opacity="0.9"></rect><rect x="40.2" y="22" width="5.7" height="10.6" fill="none" stroke="#55cc62" stroke-width="0.5" opacity="0.6"></rect><rect x="56.5" y="22.6" width="5.6" height="1" fill="#55cc62" opacity="0.9"></rect><rect x="56.5" y="24.6" width="5.6" height="1" fill="#55cc62" opacity="0.9"></rect><rect x="56.5" y="26.6" width="5.6" height="1" fill="#55cc62" opacity="0.9"></rect><rect x="56.5" y="28.6" width="5.6" height="1" fill="#55cc62" opacity="0.9"></rect><rect x="56.5" y="30.6" width="5.6" height="1" fill="#55cc62" opacity="0.9"></rect><rect x="56.5" y="32.4" width="5.6" height="1" fill="#55cc62" opacity="0.9"></rect><rect x="56.5" y="22" width="5.6" height="10.6" fill="none" stroke="#55cc62" stroke-width="0.5" opacity="0.6"></rect><rect x="15" y="26" width="4.5" height="4" fill="#2f8a3a" stroke="#55cc62" stroke-width="0.7"></rect><rect x="31.5" y="26" width="5.4" height="4" fill="#2f8a3a" stroke="#55cc62" stroke-width="0.7"></rect><rect x="47.5" y="26" width="5.0" height="4" fill="#2f8a3a" stroke="#55cc62" stroke-width="0.7"></rect><rect x="65" y="26" width="6.1" height="4" fill="#2f8a3a" stroke="#55cc62" stroke-width="0.7"></rect><rect x="71.1" y="24.2" width="4.8" height="1.6" fill="#55cc62"></rect><rect x="78.5" y="24.2" width="5.0" height="1.6" fill="#55cc62"></rect><rect x="84.5" y="24.2" width="14.0" height="1.6" fill="#55cc62"></rect><rect x="101.5" y="24.2" width="16.0" height="1.6" fill="#55cc62"></rect><rect x="4.8" y="34.3" width="14.4" height="5.4" fill="#16401c" stroke="#55cc62" stroke-width="0.7"></rect><rect x="6.5" y="35.8" width="11" height="2.4" fill="#3a9a46"></rect></svg></div>
<div class="ln" style="top: 86px; width: 18px; text-align: justify; text-align-last: justify;">名称：</div><div class="ln" style="top: 86px; left: 24.3px; width: 55.66px; text-align: justify; text-align-last: justify;">1#医疗大楼大样.dwg</div>
<div class="ln" style="top: 100.4px; width: 42px; text-align: justify; text-align-last: justify;">上传人：李佳平</div>
<div class="ln" style="top: 114.2px; width: 24px; text-align: justify; text-align-last: justify;">版本号：</div><div class="ln tag" style="top:115.2px;left:29.6px">v1</div><div class="ln" style="top:114.2px;left:40.1px">2020-09-30 15:37:32</div>
<div class="ln" style="top: 128.7px; width: 31.7px; text-align: justify; text-align-last: justify;">批注/问题：</div><div class="ln" style="top:128.7px;left:37px">0/0</div>
<div class="ln" style="top: 143px; width: 30px; text-align: justify; text-align-last: justify;">文件大小：</div><div class="ln" style="top:143px;left:34.3px">4.59MB</div>
</div>
<div class="card" style="left:400.8px;top:8.0px;height:160px">
<div class="hd"></div><div class="cb"></div><svg class="ic" style="left:103.3px;top:3.3px" width="7.2" height="7.4" viewBox="0 0 7.2 7.4"><rect x="0.5" y="1.3" width="6.2" height="4.8" fill="#a9cbf8"></rect><path d="M0.5 0v2M6.7 0v2M0.5 5.4v2M6.7 5.4v2" stroke="#3d7fe0" stroke-width="0.8"></path><path d="M0.5 1.4h6.2M0.5 6h6.2" stroke="#3d7fe0" stroke-width="0.7"></path><path d="M0 3.7h7.2" stroke="#4f8fe8" stroke-width="0.7"></path></svg><svg class="ic" style="left:115.3px;top:5.6px" width="7.4" height="2" viewBox="0 0 7.4 2"><circle cx="1" cy="1" r="0.85" fill="#2f6fd8"></circle><circle cx="3.7" cy="1" r="0.85" fill="#2f6fd8"></circle><circle cx="6.4" cy="1" r="0.85" fill="#2f6fd8"></circle></svg>
<div class="img"><div class="a" style="left:1px;top:27.7px;width:10.00px;height:7.30px;background:repeating-linear-gradient(180deg,#eee 0,#eee 1.2px,#888 1.2px,#888 1.8px)"></div><div class="a" style="left:15.3px;top:24px;width:26.70px;height:9.70px;background:repeating-linear-gradient(90deg,#f4f4f4 0,#f4f4f4 2.5px,#777 2.5px,#777 3.2px,#f4f4f4 3.2px,#f4f4f4 5.5px,#222 5.5px,#222 6.7px)"></div><div class="a" style="left:35.6px;top:21px;width:4.90px;height:1.30px;background:#c81e1e"></div><div class="a" style="left:44.6px;top:22px;width:19.40px;height:11.40px;background:linear-gradient(90deg,#e8e8e8 0,#e8e8e8 40%,#222 40%,#222 48%,#e8e8e8 48%)"></div><div class="a" style="left:47px;top:34.6px;width:18.00px;height:0.70px;background:#999"></div><div class="a" style="left:60.8px;top:21px;width:5.70px;height:1.30px;background:#c81e1e"></div><div class="a" style="left:65px;top:24.4px;width:13.00px;height:9.30px;background:repeating-linear-gradient(90deg,#48d455 0,#48d455 3px,#a5eaa8 3px,#a5eaa8 3.6px)"></div><div class="a" style="left:79.5px;top:24.4px;width:11.50px;height:9.30px;background:repeating-linear-gradient(90deg,#48d455 0,#48d455 3px,#a5eaa8 3px,#a5eaa8 3.6px)"></div><div class="a" style="left:87.6px;top:35px;width:8.10px;height:6.00px;background:#f2f2f2"></div><div class="a" style="left:99px;top:21px;width:5.00px;height:1.30px;background:#c81e1e"></div><div class="a" style="left:97px;top:24.4px;width:20.00px;height:2.80px;background:#5fd0e4"></div><div class="a" style="left:97px;top:27.2px;width:20.00px;height:3.80px;background:#ececec"></div></div>
<div class="ln" style="top: 86px; width: 18px; text-align: justify; text-align-last: justify;">名称：</div><div class="ln" style="top: 86px; left: 24.3px; width: 67.66px; text-align: justify; text-align-last: justify;">1#医疗大楼设计说明.dwg</div>
<div class="ln" style="top: 100.4px; width: 42px; text-align: justify; text-align-last: justify;">上传人：李佳平</div>
<div class="ln" style="top: 114.2px; width: 24px; text-align: justify; text-align-last: justify;">版本号：</div><div class="ln tag" style="top:115.2px;left:29.6px">v1</div><div class="ln" style="top:114.2px;left:40.1px">2020-09-30 15:37:27</div>
<div class="ln" style="top: 128.7px; width: 31.7px; text-align: justify; text-align-last: justify;">批注/问题：</div><div class="ln" style="top:128.7px;left:37px">0/0</div>
<div class="ln" style="top: 143px; width: 30px; text-align: justify; text-align-last: justify;">文件大小：</div><div class="ln" style="top:143px;left:34.3px">0.28MB</div>
</div>
<div class="card" style="left:1.0px;top:175.5px;height:160px">
<div class="hd"></div><div class="cb"></div><svg class="ic" style="left:103.3px;top:3.3px" width="7.2" height="7.4" viewBox="0 0 7.2 7.4"><rect x="0.5" y="1.3" width="6.2" height="4.8" fill="#a9cbf8"></rect><path d="M0.5 0v2M6.7 0v2M0.5 5.4v2M6.7 5.4v2" stroke="#3d7fe0" stroke-width="0.8"></path><path d="M0.5 1.4h6.2M0.5 6h6.2" stroke="#3d7fe0" stroke-width="0.7"></path><path d="M0 3.7h7.2" stroke="#4f8fe8" stroke-width="0.7"></path></svg><svg class="ic" style="left:115.3px;top:5.6px" width="7.4" height="2" viewBox="0 0 7.4 2"><circle cx="1" cy="1" r="0.85" fill="#2f6fd8"></circle><circle cx="3.7" cy="1" r="0.85" fill="#2f6fd8"></circle><circle cx="6.4" cy="1" r="0.85" fill="#2f6fd8"></circle></svg>
<div class="img"><div class="a" style="left:0.7px;top:25.2px;width:16.30px;height:6.20px;background:linear-gradient(165deg,#fafafa 58%,#3db086 62%)"></div><div class="a" style="left:26.7px;top:25.2px;width:16.70px;height:6.20px;background:linear-gradient(100deg,#2ea877,#45bf8a 60%,#2aa070);border-right:0.8px solid #d8e8e0"></div><div class="a" style="left:45.4px;top:25.2px;width:16.20px;height:6.20px;background:linear-gradient(100deg,#2ea877,#45bf8a 60%,#2aa070);border-right:0.8px solid #d8e8e0"></div><div class="a" style="left:63.7px;top:25.2px;width:16.60px;height:6.20px;background:linear-gradient(100deg,#2ea877,#45bf8a 60%,#2aa070);border-right:0.8px solid #d8e8e0"></div><div class="a" style="left:82.3px;top:25.2px;width:16.20px;height:6.20px;background:linear-gradient(100deg,#2ea877,#45bf8a 60%,#2aa070);border-right:0.8px solid #d8e8e0"></div><div class="a" style="left:100.6px;top:25.2px;width:16.60px;height:6.20px;background:linear-gradient(100deg,#2ea877,#45bf8a 60%,#2aa070);border-right:0.8px solid #d8e8e0"></div><div class="a" style="left:0.7px;top:32.6px;width:16.30px;height:5.80px;background:linear-gradient(100deg,#2ea877,#45bf8a 60%,#2aa070);border-right:0.8px solid #d8e8e0"></div></div>
<div class="ln" style="top: 86px; width: 18px; text-align: justify; text-align-last: justify;">名称：</div><div class="ln" style="top: 86px; left: 24.3px; width: 67.66px; text-align: justify; text-align-last: justify;">1#医疗大楼门窗大样.dwg</div>
<div class="ln" style="top: 100.4px; width: 42px; text-align: justify; text-align-last: justify;">上传人：李佳平</div>
<div class="ln" style="top: 114.2px; width: 24px; text-align: justify; text-align-last: justify;">版本号：</div><div class="ln tag" style="top:115.2px;left:29.6px">v1</div><div class="ln" style="top:114.2px;left:40.1px">2020-09-30 15:37:28</div>
<div class="ln" style="top: 128.7px; width: 31.7px; text-align: justify; text-align-last: justify;">批注/问题：</div><div class="ln" style="top:128.7px;left:37px">0/0</div>
</div>
</div>
<div class="a" style="left:826px;top:112px;width:7px;height:295.5px;background:#f1f1f1"></div>
<div class="a" style="left:826.3px;top:120px;width:6px;height:252px;background:#c1c1c1"></div>
<svg class="ic" style="left:827.5px;top:114.5px" width="4" height="3" viewBox="0 0 4 3"><path d="M0.3 2.6h3.4L2 0.4z" fill="#555"></path></svg>
<svg class="ic" style="left:827.5px;top:403px" width="4" height="3" viewBox="0 0 4 3"><path d="M0.3 0.4h3.4L2 2.6z" fill="#555"></path></svg>
<div class="a" style="left:620.8px;top:407.7px;width:222.5px;height:12px;background:#eaebed;border-top:0.7px solid #d6dee8"></div>
<div class="t" style="left: 623.8px; top: 409.2px; font-size: 6.2px; color: rgb(51, 51, 51); width: 24px; text-align: justify; text-align-last: justify;">文件列表</div>
<svg class="ic" style="left:828.8px;top:412.2px" width="5" height="3" viewBox="0 0 5 3"><path d="M0.4 2.6L2.5 0.5L4.6 2.6" fill="none" stroke="#888" stroke-width="0.6"></path></svg>

</body></html>
